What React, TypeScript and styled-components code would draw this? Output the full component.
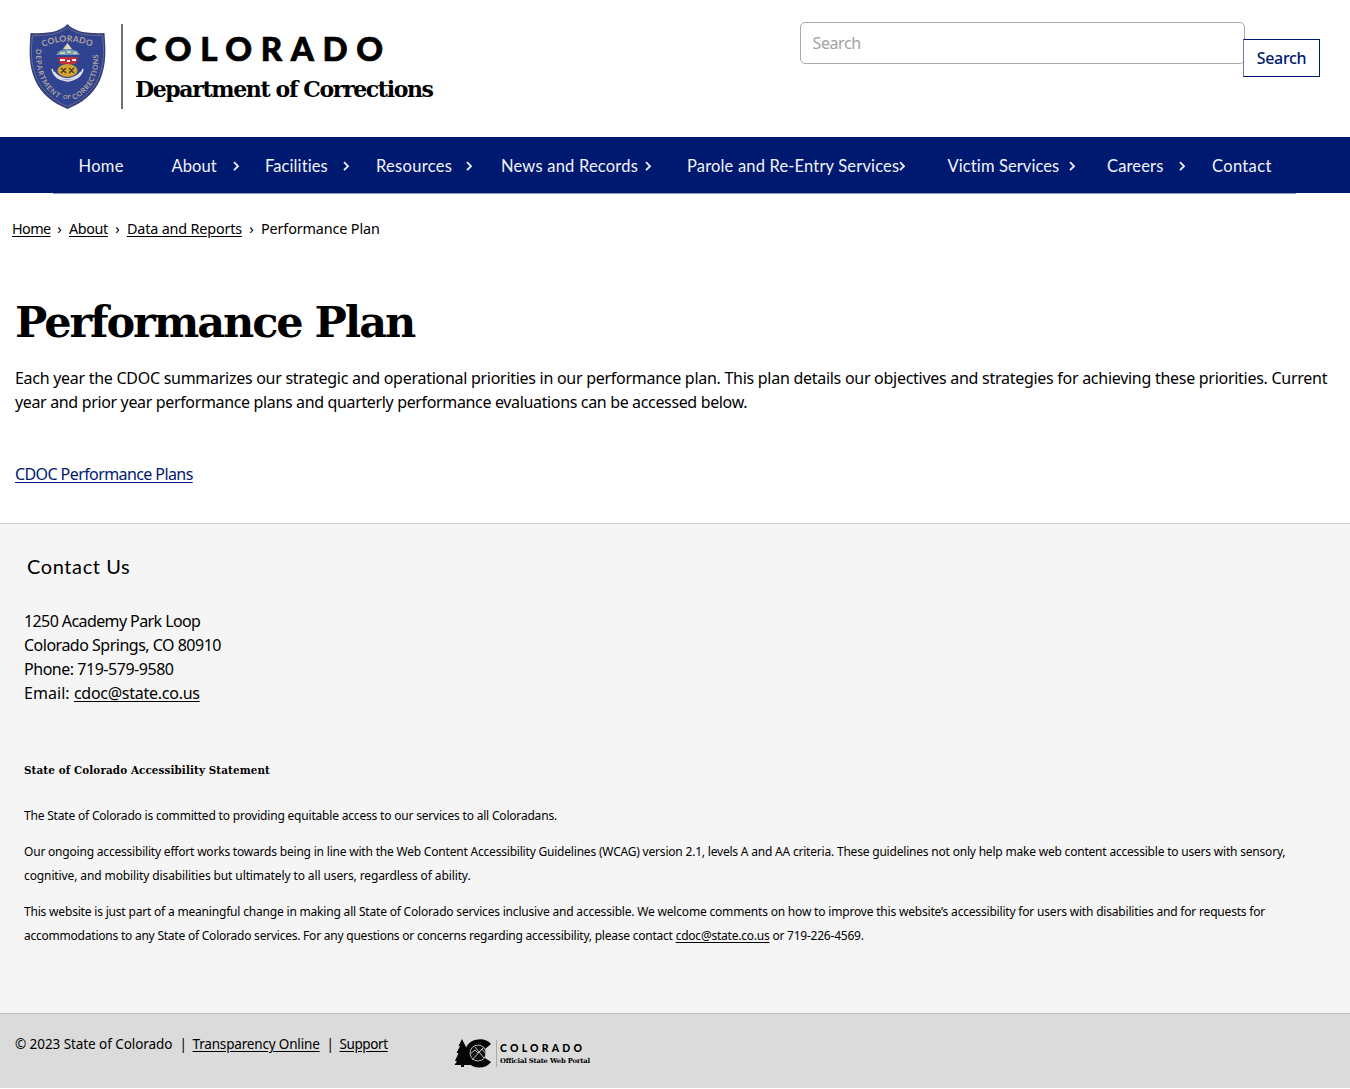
import React from "react";
import styled, { createGlobalStyle } from "styled-components";

const bodyFont = `"Noto Sans", sans-serif`;
const sansFont = `Lato, "Open Sans", sans-serif`;
const slabFont = `"DejaVu Serif", serif`;
const slabCondensed = `"DejaVu Serif Condensed", "DejaVu Serif", serif`;

const GlobalStyle = createGlobalStyle`
  * { box-sizing: border-box; }
  body { margin: 0; background: #fff; color: #000; font-family: ${bodyFont}; }
  a { color: inherit; }
`;

const Page = styled.div`
  width: 1350px;
  height: 1089px;
  overflow: hidden;
  display: flex;
  flex-direction: column;
`;

const Header = styled.header`
  height: 137px;
  flex: none;
  display: flex;
  justify-content: space-between;
  align-items: flex-start;
  padding: 22px 30px 0 28px;
`;

const Brand = styled.a`
  display: block;
  height: 90px;
`;

const SearchForm = styled.form`
  display: flex;
  align-items: flex-start;
  margin: 0;
`;

const SearchInput = styled.input`
  width: 445px;
  height: 42px;
  padding: 0 11.5px;
  border: 1px solid #a9a9ad;
  border-radius: 5px;
  background: #fff;
  font: 400 16px/24px ${bodyFont};
  letter-spacing: -0.4px;
  outline: none;
  &::placeholder { color: #a2a2a2; opacity: 1; }
`;

const SearchButton = styled.button`
  width: 77px;
  height: 38px;
  margin: 17px 0 0 -2px;
  padding: 0;
  border: 1px solid #001970;
  border-left-color: #6f7aab;
  background: #fff;
  color: #001970;
  font: 500 16px/24px ${bodyFont};
  letter-spacing: -0.3px;
`;

const NavBar = styled.nav`
  height: 56px;
  flex: none;
  background: #001970;
  display: flex;
  padding-left: 53px;
`;

const NavList = styled.ul`
  width: 1243px;
  height: 57px;
  margin: 0;
  padding: 2px 0 0 25.5px;
  list-style: none;
  display: flex;
  border-bottom: 1px solid #8c97c0;
`;

const NavItem = styled.li<{ $width: number; $gap: number }>`
  width: ${(p) => p.$width}px;
  flex: none;
  display: flex;
  align-items: center;
  justify-content: space-between;
  padding-right: ${(p) => p.$gap}px;
  color: #f1f3fa;
  white-space: nowrap;
`;

const NavLink = styled.span<{ $track: number }>`
  font: 400 16.5px/24px ${sansFont};
  letter-spacing: ${(p) => p.$track}px;
  width: 0;
`;

const Crumbs = styled.div`
  height: 70px;
  flex: none;
  display: flex;
  align-items: center;
  padding-left: 12px;
  font-size: 14.4px;
  white-space: nowrap;
`;

const Crumb = styled.span<{ $width: number; $track: number; $link?: boolean }>`
  width: ${(p) => p.$width}px;
  letter-spacing: ${(p) => p.$track}px;
  text-decoration: ${(p) => (p.$link ? "underline" : "none")};
  text-underline-offset: 2px;
`;

const Separator = styled.span`
  width: 19px;
  display: flex;
  justify-content: center;
`;

const Main = styled.main`
  height: 260px;
  flex: none;
  padding: 29px 15px 0;
`;

const Title = styled.h1`
  margin: 0;
  font: 700 43px/60px ${slabFont};
  letter-spacing: -2.05px;
`;

const Body = styled.p<{ $top: number }>`
  margin: ${(p) => p.$top}px 0 0;
  font-size: 16px;
  line-height: 24px;
  white-space: nowrap;
`;

const Small = styled(Body)`
  font-size: 12px;
`;

const Line = styled.span<{ $track: number }>`
  display: block;
  letter-spacing: ${(p) => p.$track}px;
`;

const Underlined = styled.a<{ $track?: number; $color?: string }>`
  color: ${(p) => p.$color ?? "inherit"};
  letter-spacing: ${(p) => (p.$track === undefined ? "inherit" : `${p.$track}px`)};
  text-decoration: underline;
  text-underline-offset: 2px;
`;

const Contact = styled.section`
  height: 490px;
  flex: none;
  background: #f5f5f5;
  border-top: 1px solid #d2d2d2;
  padding: 27px 24px 0;
`;

const ContactTitle = styled.h2`
  margin: 0 0 0 3px;
  font: 400 20px/30px ${sansFont};
  letter-spacing: 0.6px;
`;

const StatementTitle = styled.h3`
  margin: 53px 0 0;
  font: 700 11.5px/24px ${slabCondensed};
  letter-spacing: 0.12px;
`;

const Footer = styled.footer`
  height: 75px;
  flex: none;
  background: #dbdbdb;
  border-top: 1px solid #bdbdbd;
  display: flex;
  padding: 18px 15px 0;
  font-size: 13.5px;
  line-height: 24px;
  white-space: nowrap;
`;

const Legal = styled.div`
  width: 437px;
  display: flex;
`;

const LegalPart = styled(Crumb)``;

const Chevron = ({ color = "#f1f3fa", size = 10 }: { color?: string; size?: number }) => (
  <svg width={size} height={size} viewBox="0 0 10 10" fill="none" stroke={color} strokeWidth="1.8">
    <path d="M3 1.2L7 5.2L3 9.2" />
  </svg>
);

const DepartmentLogo = () => (
  <svg width="460" height="90" viewBox="28 22 460 90">
    <defs>
      <path id="arcTop" d="M43 47Q67 36 92 47" />
      <path id="arcLeft" d="M36 49C35 75 43 91 63 101" />
      <path id="arcRight" d="M74 100C93 90 100 74 98 50" />
    </defs>
    <path d="M67.500 24C61 31 50 34 30.500 33C29.500 48 28 64 35 80C41 94 53 103 67.500 109C82 103 94 94 100 80C107 64 105.500 48 104.500 33C85 34 74 31 67.500 24Z" fill="#343e7e" />
    <path d="M67.500 27C61 33 50 36 32.500 35.500C31 49 30 64 37 79C43 92 54 101 67.500 106.500C81 101 92 92 98 79C105 64 104 49 102.500 35.500C85 36 74 33 67.500 27Z" fill="#304391" stroke="#77768a" strokeWidth="0.8" />
    <g fontFamily={sansFont} fontWeight="700" fill="#b0a49a">
      <text fontSize="8.500"><textPath href="#arcTop" textLength="50">COLORADO</textPath></text>
      <text fontSize="7.200"><textPath href="#arcLeft" textLength="57">DEPARTMENT</textPath></text>
      <text fontSize="5.500" x="63" y="99">OF</text>
      <text fontSize="7.200"><textPath href="#arcRight" textLength="55">CORRECTIONS</textPath></text>
    </g>
    <path d="M67.500 43L72 49H63Z" fill="#ded8b9" />
    <path d="M59 51Q67.500 47 77 51L80 55H56Z" fill="#6c9cbb" />
    <path d="M60 53H65M67 52H71M73 53H77" stroke="#d8c6a6" strokeWidth="2" />
    <path d="M58 57H78L76 64H60Z" fill="#bd303d" />
    <path d="M60 60H65M67 61H70M72 60H76" stroke="#f3f0ec" strokeWidth="2" />
    <ellipse cx="67.500" cy="70.500" rx="10" ry="6.500" fill="#d2a42e" />
    <path d="M61 68L66 73M66 68L61 73M69 68L74 73M74 68L69 73" stroke="#493b2c" strokeWidth="1.400" />
    <path d="M52 69Q54 79 67 81Q81 79 83 69M54 72Q58 78 67 79Q77 78 81 72" fill="none" stroke="#dfe0e8" strokeWidth="1.500" />
    <path d="M122 24V109" stroke="#222" strokeWidth="1.300" />
    <text x="135" y="61" fontFamily={sansFont} fontWeight="900" fontSize="33" textLength="248" lengthAdjust="spacing" stroke="#000" strokeWidth="0.700">COLORADO</text>
    <text x="135" y="97" fontFamily={slabFont} fontWeight="700" fontSize="22" textLength="299" lengthAdjust="spacing">Department of Corrections</text>
  </svg>
);

const PortalMark = styled.svg`
  margin-top: 4px;
`;

const PortalLogo = () => (
  <PortalMark width="170" height="34" viewBox="452 1036 170 34">
    <path d="M462 1039L458.500 1046H460L456.500 1053H458.500L455 1061H457L454.500 1065H461V1067H464V1065H474L472 1058L467 1049Z" fill="#050505" />
    <path d="M491 1044Q486 1038.500 478 1039.500C469 1040 465 1047 465 1053C465 1061 470 1067.500 479 1067.500Q487 1067.500 491 1062L485 1058V1049Z" fill="#050505" />
    <circle cx="478" cy="1053" r="8" fill="#111" stroke="#c8c8c8" strokeWidth="0.900" />
    <path d="M470 1054L475 1050L478 1053L482 1049L486 1054M472 1060L484 1047M475 1047L484 1058" fill="none" stroke="#c8c8c8" strokeWidth="0.900" />
    <path d="M496.500 1040V1067" stroke="#aaa" />
    <text x="500" y="1051.500" fontFamily={sansFont} fontWeight="900" fontSize="10.500" textLength="82" lengthAdjust="spacing">COLORADO</text>
    <text x="500" y="1063" fontFamily={slabFont} fontWeight="700" fontSize="6.800" textLength="90" lengthAdjust="spacing">Official State Web Portal</text>
  </PortalMark>
);

const navigation = [
  { label: "Home", width: 93, gap: 0, track: 0.3 },
  { label: "About", width: 93.5, gap: 24, track: 0.1, menu: true },
  { label: "Facilities", width: 111, gap: 25, track: 0.1, menu: true },
  { label: "Resources", width: 125, gap: 27, track: 0.3, menu: true },
  { label: "News and Records", width: 186, gap: 34, track: 0.2, menu: true },
  { label: "Parole and Re-Entry Services", width: 260.5, gap: 40.5, track: 0.17, menu: true },
  { label: "Victim Services", width: 159.5, gap: 30, track: 0.1, menu: true },
  { label: "Careers", width: 105, gap: 25, track: 0.15, menu: true },
  { label: "Contact", width: 70, gap: 0, track: 0.35 },
];

export default function App() {
  return (
    <Page>
      <GlobalStyle />
      <Header>
        <Brand><DepartmentLogo /></Brand>
        <SearchForm>
          <SearchInput placeholder="Search" />
          <SearchButton type="button">Search</SearchButton>
        </SearchForm>
      </Header>
      <NavBar>
        <NavList>
          {navigation.map((n) => (
            <NavItem key={n.label} $width={n.width} $gap={n.gap}>
              <NavLink $track={n.track}>{n.label}</NavLink>
              {n.menu && <Chevron />}
            </NavItem>
          ))}
        </NavList>
      </NavBar>
      <Crumbs>
        <Crumb $width={38} $track={-0.6} $link>Home</Crumb>
        <Separator>›</Separator>
        <Crumb $width={39} $track={-0.4} $link>About</Crumb>
        <Separator>›</Separator>
        <Crumb $width={115} $track={-0.18} $link>Data and Reports</Crumb>
        <Separator>›</Separator>
        <Crumb $width={120} $track={-0.14}>Performance Plan</Crumb>
      </Crumbs>
      <Main>
        <Title>Performance Plan</Title>
        <Body $top={14}>
          <Line $track={-0.277}>Each year the CDOC summarizes our strategic and operational priorities in our performance plan. This plan details our objectives and strategies for achieving these priorities. Current</Line>
          <Line $track={-0.35}>year and prior year performance plans and quarterly performance evaluations can be accessed below.</Line>
        </Body>
        <Body $top={48}><Underlined $track={-0.59} $color="#001970">CDOC Performance Plans</Underlined></Body>
      </Main>
      <Contact>
        <ContactTitle>Contact Us</ContactTitle>
        <Body $top={28}>
          <Line $track={-0.59}>1250 Academy Park Loop</Line>
          <Line $track={-0.5}>Colorado Springs, CO 80910</Line>
          <Line $track={-0.47}>Phone: 719-579-9580</Line>
          <Line $track={0.05}>Email: <Underlined $track={-0.26}>cdoc@state.co.us</Underlined></Line>
        </Body>
        <StatementTitle>State of Colorado Accessibility Statement</StatementTitle>
        <Small $top={22}>
          <Line $track={-0.19}>The State of Colorado is committed to providing equitable access to our services to all Coloradans.</Line>
        </Small>
        <Small $top={12}>
          <Line $track={-0.2}>Our ongoing accessibility effort works towards being in line with the Web Content Accessibility Guidelines (WCAG) version 2.1, levels A and AA criteria. These guidelines not only help make web content accessible to users with sensory,</Line>
          <Line $track={-0.11}>cognitive, and mobility disabilities but ultimately to all users, regardless of ability.</Line>
        </Small>
        <Small $top={12}>
          <Line $track={-0.187}>This website is just part of a meaningful change in making all State of Colorado services inclusive and accessible. We welcome comments on how to improve this website’s accessibility for users with disabilities and for requests for</Line>
          <Line $track={-0.227}>accommodations to any State of Colorado services. For any questions or concerns regarding accessibility, please contact <Underlined>cdoc@state.co.us</Underlined> or 719-226-4569.</Line>
        </Small>
      </Contact>
      <Footer>
        <Legal>
          <LegalPart $width={164.5} $track={-0.07}>© 2023 State of Colorado</LegalPart>
          <LegalPart $width={13} $track={0}>|</LegalPart>
          <LegalPart $width={134} $track={-0.17}><Underlined>Transparency Online</Underlined></LegalPart>
          <LegalPart $width={13} $track={0}>|</LegalPart>
          <LegalPart $width={50} $track={-0.4}><Underlined>Support</Underlined></LegalPart>
        </Legal>
        <PortalLogo />
      </Footer>
    </Page>
  );
}
